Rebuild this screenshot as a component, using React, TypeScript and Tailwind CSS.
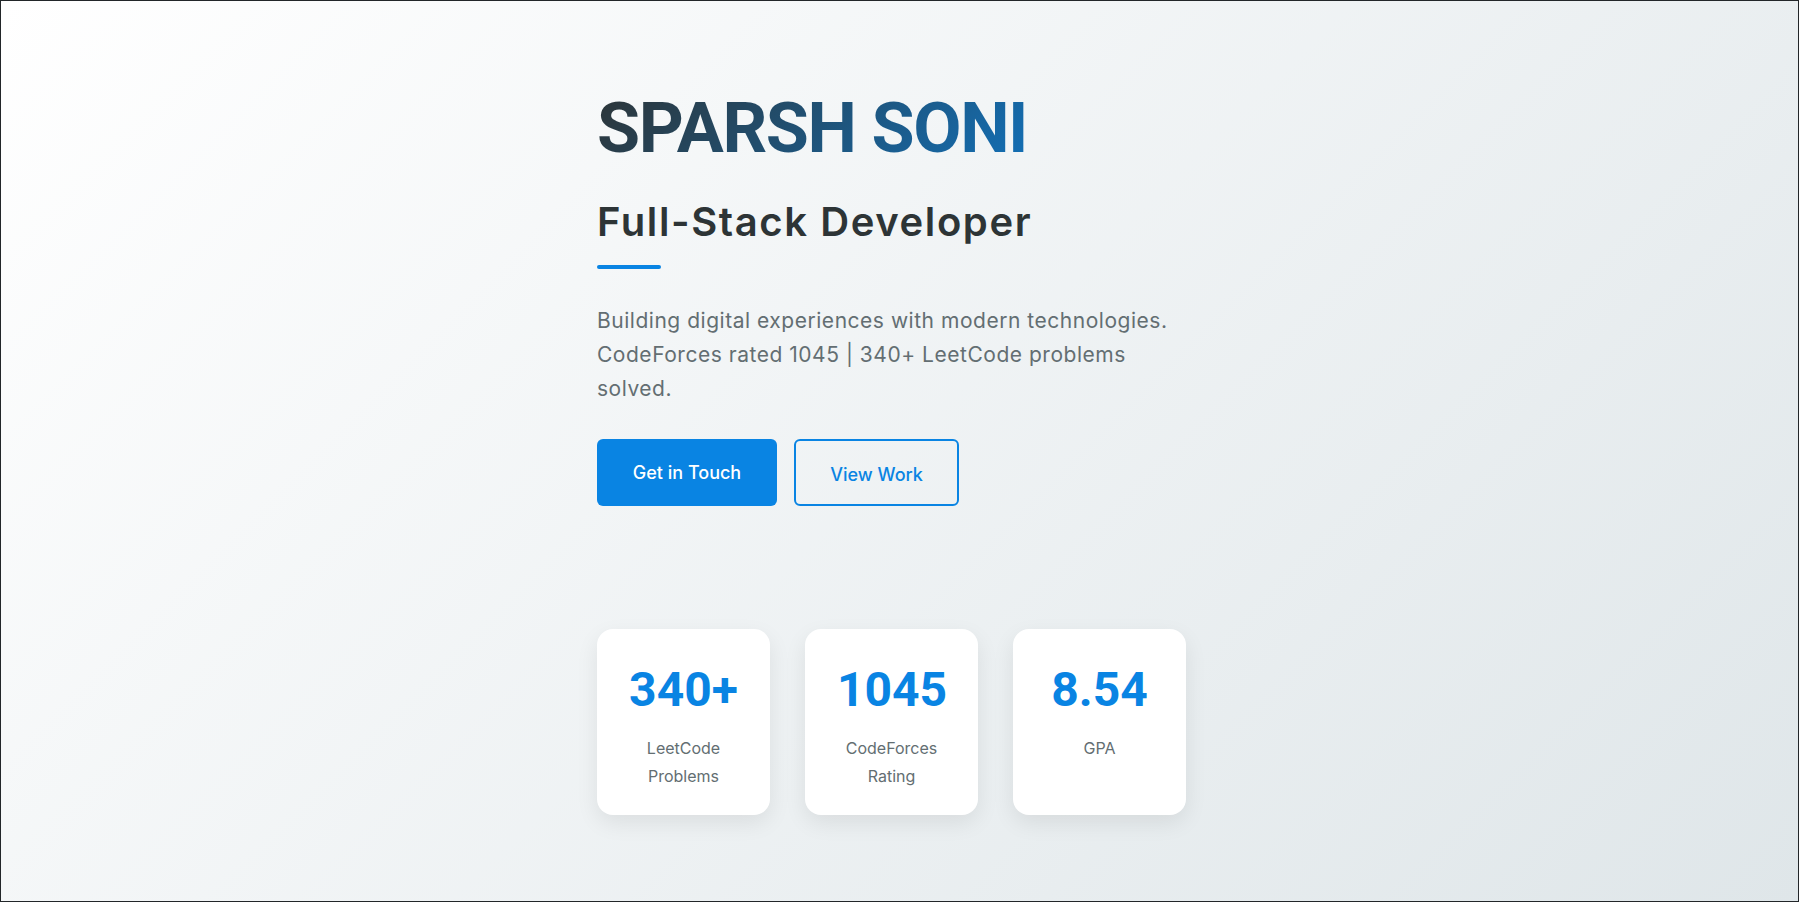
import React from "react";

const stats = [
  { value: "340+", label: "LeetCode Problems" },
  { value: "1045", label: "CodeForces Rating" },
  { value: "8.54", label: "GPA" },
];

export default function App() {
  return (
    <div className="w-full h-[902px] border border-[#222629] bg-[linear-gradient(135deg,#ffffff_0%,#dfe6e9_100%)] overflow-hidden">
      <div className="flex justify-center pt-[85px]">
        <div className="w-[605px] flex flex-col">
          <h1 className="font-['Roboto',sans-serif] font-bold text-[70px] leading-[84px] tracking-[-0.02em] bg-[linear-gradient(135deg,#2d3436,#0984e3)] bg-clip-text text-transparent">
            SPARSH SONI
          </h1>
          <h2 className="mt-[28px] font-['Inter',sans-serif] font-semibold text-[40px] leading-[48px] tracking-[0.04em] text-[#2d3436]">
            Full-Stack Developer
          </h2>
          <div className="mt-[19px] w-16 h-1 rounded-full bg-[#0984e3]" />
          <p className="mt-[35px] max-w-[580px] font-['Inter',sans-serif] text-[21px] leading-[34px] tracking-[0.025em] text-[#636e72]">
            Building digital experiences with modern technologies. CodeForces rated 1045 | 340+ LeetCode problems solved.
          </p>
          <div className="mt-[33px] flex gap-[17px] font-['Inter',sans-serif]">
            <button className="w-[180px] h-[67px] rounded-[6px] bg-[#0984e3] text-white text-[18px] font-medium">
              Get in Touch
            </button>
            <button className="w-[165px] h-[67px] rounded-[6px] border-2 border-[#0984e3] text-[#0984e3] text-[18px] font-medium pt-[3px]">
              View Work
            </button>
          </div>
          <div className="mt-[123px] flex gap-[35px]">
            {stats.map((s) => (
              <div
                key={s.value}
                className="w-[173px] h-[186px] rounded-[16px] bg-white shadow-[0_8px_22px_rgba(0,0,0,0.08)] px-8 pt-8 text-center"
              >
                <div className="font-['Roboto',sans-serif] font-bold text-[48px] leading-[57.6px] text-[#0984e3]">
                  {s.value}
                </div>
                <div className="mt-[15px] font-['Inter',sans-serif] text-[16px] leading-[28px] text-[#636e72]">
                  {s.label}
                </div>
              </div>
            ))}
          </div>
        </div>
      </div>
    </div>
  );
}
